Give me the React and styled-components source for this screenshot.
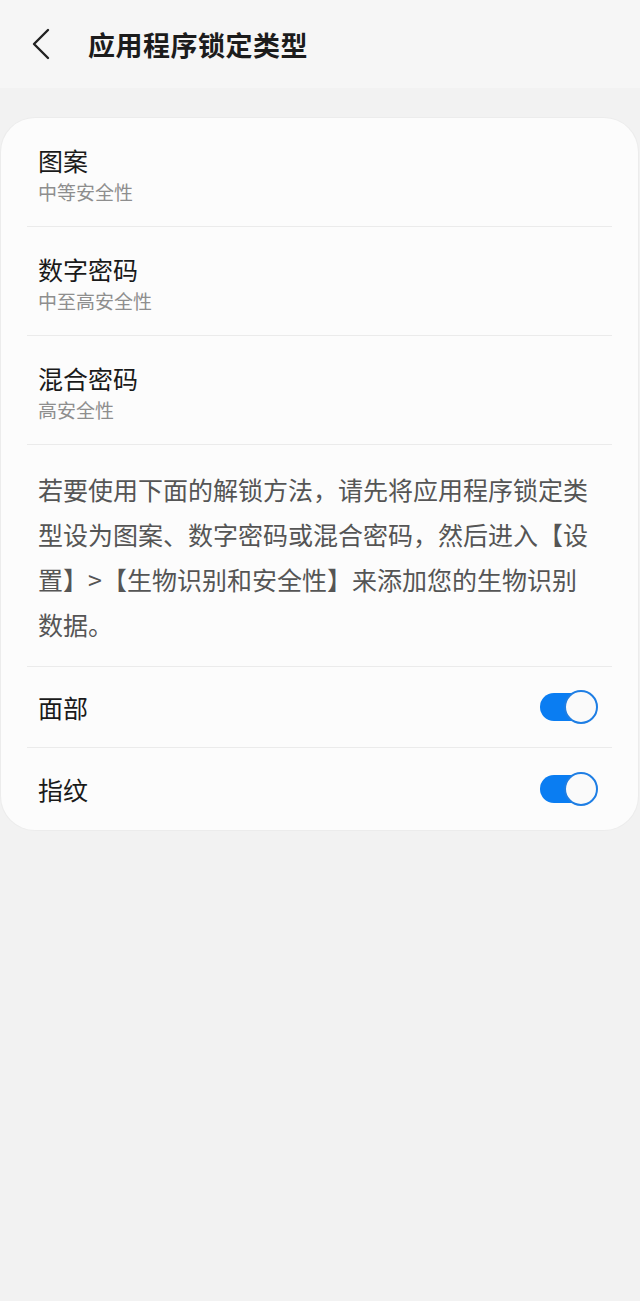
import { createGlobalStyle, styled } from "styled-components";

const GlobalStyle = createGlobalStyle`
  html, body {
    margin: 0;
    padding: 0;
    background: #f2f2f2;
  }
  body {
    font-family: "Noto Sans CJK SC", "Noto Sans", sans-serif;
  }
  * {
    box-sizing: border-box;
  }
`;

const Page = styled.div`
  min-height: 1301px;
  background: #f2f2f2;
`;

const Header = styled.div`
  height: 88px;
  display: flex;
  align-items: center;
  background: #f6f6f6;
`;

const Back = styled.button`
  width: 88px;
  height: 88px;
  display: flex;
  align-items: center;
  padding: 0 0 0 30px;
  border: none;
  background: none;
  cursor: pointer;
`;

const Title = styled.div`
  font-size: 27px;
  font-weight: 600;
  color: #1c1c1c;
  letter-spacing: 0.5px;
`;

const Card = styled.div`
  margin: 30px 2px 0 1px;
  background: #fcfcfc;
  border-radius: 34px;
  padding: 0 26px;
  box-shadow: 0 0 0 1px #ececec;
`;

const Row = styled.div`
  display: ${(p) => (p.$stacked ? "block" : "flex")};
  align-items: center;
  justify-content: space-between;
  padding: ${(p) => (p.$stacked ? "26px 11px 20px" : "0 14px 0 11px")};
  height: ${(p) => (p.$stacked ? "auto" : p.$last ? "82px" : "81px")};
  border-bottom: ${(p) => (p.$last ? "none" : "1px solid #ebebeb")};
`;

const ItemTitle = styled.div`
  font-size: 25px;
  line-height: 32px;
  color: #1a1a1a;
`;

const ItemSub = styled.div`
  font-size: 19px;
  line-height: 28px;
  margin-top: 2px;
  color: #8e8e8e;
`;

const Note = styled.p`
  margin: 0;
  padding: 22px 11px 19px;
  font-size: 25px;
  line-height: 45px;
  color: #555555;
  border-bottom: 1px solid #ebebeb;
`;

const Switch = styled.div`
  position: relative;
  width: 58px;
  height: 34px;
`;

const Track = styled.div`
  position: absolute;
  left: 0;
  top: 3px;
  width: 54px;
  height: 28px;
  border-radius: 14px;
  background: #0a7df2;
`;

const Knob = styled.div`
  position: absolute;
  right: 0;
  top: 0;
  width: 34px;
  height: 34px;
  border-radius: 50%;
  border: 2px solid #1e7ee4;
  background: #fafafa;
`;

const options = [
  { title: "图案", sub: "中等安全性" },
  { title: "数字密码", sub: "中至高安全性" },
  { title: "混合密码", sub: "高安全性" },
];

const biometrics = ["面部", "指纹"];

export default function App() {
  return (
    <Page>
      <GlobalStyle />
      <Header>
        <Back aria-label="返回">
          <svg width="22" height="32" viewBox="0 0 22 32">
            <polyline
              points="18,2 4,16 18,30"
              fill="none"
              stroke="#222"
              strokeWidth="2.4"
              strokeLinecap="round"
              strokeLinejoin="round"
            />
          </svg>
        </Back>
        <Title>应用程序锁定类型</Title>
      </Header>
      <Card>
        {options.map((o) => (
          <Row key={o.title} $stacked>
            <ItemTitle>{o.title}</ItemTitle>
            <ItemSub>{o.sub}</ItemSub>
          </Row>
        ))}
        <Note>
          若要使用下面的解锁方法，请先将应用程序锁定类型设为图案、数字密码或混合密码，然后进入【设置】&gt;【生物识别和安全性】来添加您的生物识别数据。
        </Note>
        {biometrics.map((b, i) => (
          <Row key={b} $last={i === biometrics.length - 1}>
            <ItemTitle>{b}</ItemTitle>
            <Switch>
              <Track />
              <Knob />
            </Switch>
          </Row>
        ))}
      </Card>
    </Page>
  );
}
